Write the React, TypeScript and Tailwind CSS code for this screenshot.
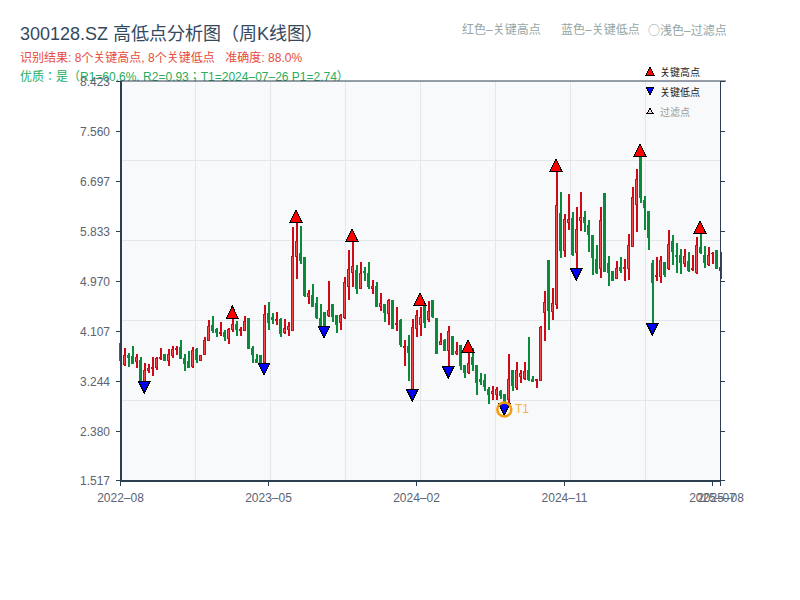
// [red?, high, low, bodyTop, bodyBottom] measured on the plot
type Bar = [number, number, number, number, number];

const seg1: Bar[] = [
  [0, 430, 482, 430, 482], [1, 444, 497, 465, 495], [0, 460, 500, 466, 474], [0, 438, 492, 468, 492],
  [1, 462, 505, 472, 486], [0, 472, 545, 480, 545], [1, 490, 545, 510, 545], [1, 492, 518, 504, 514],
  [1, 472, 528, 502, 508], [1, 470, 510, 474, 504], [1, 444, 480, 472, 478], [0, 462, 483, 462, 483],
  [1, 448, 498, 462, 484], [1, 438, 474, 448, 468], [1, 438, 466, 444, 450], [0, 420, 476, 440, 476],
  [0, 462, 513, 474, 492], [0, 454, 503, 484, 503], [1, 441, 503, 450, 500], [0, 445, 488, 448, 480],
  [1, 464, 484, 466, 482], [1, 411, 465, 420, 465], [1, 360, 424, 378, 424], [0, 348, 398, 376, 392],
  [0, 384, 411, 388, 400], [1, 366, 408, 396, 402], [0, 390, 423, 396, 410], [1, 384, 432, 386, 418],
  [1, 355, 396, 372, 390], [0, 362, 408, 372, 390], [1, 380, 408, 386, 392], [1, 348, 394, 362, 392],
  [0, 354, 447, 354, 447], [0, 438, 489, 444, 464], [0, 462, 490, 478, 488], [0, 465, 490, 465, 490],
  [1, 315, 490, 342, 490], [0, 306, 390, 338, 368], [0, 340, 372, 350, 360], [1, 336, 376, 356, 362],
  [0, 354, 411, 356, 402], [1, 356, 402, 384, 400], [1, 366, 408, 378, 390], [1, 82, 392, 168, 392],
  [1, 68, 236, 124, 170], [0, 78, 192, 160, 182], [0, 170, 292, 170, 288], [1, 270, 312, 280, 290],
];

const seg2: Bar[] = [
  [0, 222, 290, 256, 290], [0, 262, 326, 280, 324], [0, 282, 350, 324, 350], [0, 306, 350, 306, 350],
  [1, 213, 320, 300, 318], [0, 282, 336, 282, 320], [0, 316, 368, 316, 344], [1, 312, 360, 316, 338],
  [1, 202, 326, 216, 324], [1, 120, 270, 178, 230], [1, 95, 230, 168, 188], [0, 166, 252, 180, 236],
  [1, 156, 238, 190, 236], [0, 170, 214, 182, 190], [0, 156, 236, 188, 232], [1, 210, 252, 228, 236],
  [0, 216, 290, 228, 290], [1, 250, 302, 280, 290], [0, 282, 336, 282, 308], [1, 268, 344, 270, 312],
  [0, 270, 356, 270, 356], [1, 292, 362, 340, 346], [0, 326, 410, 330, 406], [1, 390, 468, 408, 414],
  [0, 376, 512, 408, 430], [1, 328, 540, 352, 540], [1, 300, 380, 316, 356], [1, 290, 378, 322, 344],
  [0, 280, 354, 288, 340], [1, 274, 336, 304, 330], [0, 270, 324, 270, 322], [0, 324, 432, 324, 432],
  [1, 370, 404, 394, 404], [0, 388, 424, 390, 422], [1, 348, 470, 364, 422], [0, 378, 434, 378, 434],
  [1, 396, 434, 422, 432], [0, 404, 480, 404, 468], [0, 466, 504, 466, 490], [1, 428, 492, 460, 490],
  [0, 414, 482, 442, 466], [0, 466, 554, 466, 520], [0, 488, 524, 508, 516], [0, 492, 542, 510, 532],
  [0, 532, 582, 536, 556], [1, 528, 570, 544, 552], [1, 532, 570, 536, 556], [0, 540, 566, 542, 558],
  [0, 552, 590, 552, 590], [1, 432, 578, 508, 570],
];

const seg3: Bar[] = [
  [0, 360, 423, 360, 408], [1, 336, 420, 360, 415], [1, 360, 398, 368, 380], [1, 336, 390, 362, 388],
  [0, 262, 392, 360, 390], [0, 378, 395, 388, 395], [1, 388, 414, 388, 392],
];

const seg4: Bar[] = [
  [1, 558, 723, 560, 723], [1, 454, 602, 486, 520], [0, 360, 570, 360, 512], [1, 444, 540, 490, 515],
  [1, 95, 506, 196, 494], [0, 156, 354, 220, 334], [1, 222, 350, 238, 334], [1, 162, 270, 238, 248],
  [0, 216, 348, 234, 344], [1, 202, 385, 268, 338], [1, 156, 272, 230, 242], [0, 213, 276, 232, 248],
  [0, 240, 336, 256, 286], [0, 285, 405, 285, 354], [0, 316, 402, 358, 398], [1, 202, 414, 240, 388],
  [0, 159, 396, 159, 396], [0, 348, 438, 370, 400], [0, 392, 422, 392, 422], [1, 362, 416, 384, 416],
  [0, 352, 400, 380, 392], [1, 358, 422, 382, 386], [1, 282, 420, 316, 386], [1, 142, 320, 172, 320],
  [1, 87, 276, 117, 194], [0, 50, 190, 50, 175], [0, 168, 270, 180, 204], [0, 213, 330, 213, 294],
  [0, 360, 550, 368, 430], [1, 352, 422, 405, 410], [1, 348, 428, 360, 412], [0, 366, 412, 366, 404],
  [1, 270, 390, 312, 388], [0, 286, 376, 304, 336], [0, 310, 400, 344, 352], [0, 326, 402, 346, 368],
  [1, 326, 380, 348, 372], [0, 336, 396, 364, 392], [1, 346, 394, 384, 390], [1, 292, 402, 316, 398],
  [0, 280, 342, 322, 340], [0, 318, 384, 346, 370], [1, 322, 378, 346, 374], [1, 336, 372, 338, 342],
  [0, 330, 388, 330, 388], [1, 336, 416, 382, 392],
];

const toPlot = (bars: Bar[], top: number): Bar[] =>
  bars.map(([c, h, l, a, b]) => [c, top + h / 3, top + l / 3, top + a / 3, top + b / 3]);

const bars = [...toPlot(seg1, 200), ...toPlot(seg2, 210), ...toPlot(seg3, 250), ...toPlot(seg4, 140)];

const yTicks = [
  ["8.423", 81], ["7.560", 131], ["6.697", 181], ["5.833", 231], ["4.970", 281],
  ["4.107", 331], ["3.244", 381], ["2.380", 431], ["1.517", 480],
] as const;

const xTicks = [
  ["2022–08", 120.5], ["2023–05", 268.5], ["2024–02", 416.5], ["2024–11", 564.5], ["2025–07", 712.5], ["2025–08", 720.5],
] as const;

const highs = [[232.3, 306], [296, 210], [352, 229], [420, 293], [468, 340], [556, 159], [640, 144], [700, 221]];
const lows = [[144.3, 393], [264, 375], [324, 338], [412.3, 401], [448.3, 378], [504.3, 415], [576.3, 280], [652.3, 335]];

function Chart() {
  return (
    <svg width={800} height={540} viewBox="0 60 800 540" className="block">
      <rect x={121} y={81} width={599} height={399} fill="#f8f9fb" />
      {[195.5, 270.5, 345.5, 420.5, 495.5, 570.5, 645.5].map((x) => (
        <line key={x} x1={x} x2={x} y1={81} y2={480} stroke="#e3e6ea" />
      ))}
      {[160.5, 240.5, 320.5, 400.5].map((y) => (
        <line key={y} x1={121} x2={720} y1={y} y2={y} stroke="#e3e6ea" />
      ))}

      {bars.map(([red, high, low, top, bottom], i) => {
        const x = Math.floor(120.5 + i * 4);
        const dark = red ? "#cf0a16" : "#0a8a3a";
        return (
          <g key={i} shapeRendering="crispEdges">
            <rect x={x - 0.5} y={high} width={2} height={low - high} fill={dark} />
            <rect x={x - 1} y={top} width={3} height={bottom - top} fill={dark} />
            {red === 1 && <rect x={x} y={top + 1} width={1} height={Math.max(bottom - top - 2, 0)} fill="#f6494c" />}
          </g>
        );
      })}

      {highs.map(([x, y]) => (
        <polygon key={x} points={`${x},${y} ${x + 6},${y + 12.5} ${x - 6},${y + 12.5}`} fill="#ff0000" stroke="#000" shapeRendering="crispEdges" />
      ))}
      {lows.map(([x, y]) => (
        <polygon key={x} points={`${x},${y} ${x + 6},${y - 12} ${x - 6},${y - 12}`} fill="#0000ff" stroke="#000" shapeRendering="crispEdges" />
      ))}

      <circle cx={504.3} cy={409.5} r={7} fill="none" stroke="#f39c12" strokeWidth={2.5} />
      <text x={515} y={412.5} className="fill-[#f5b04a] text-xs">T1</text>

      <line x1={120} x2={726} y1={81} y2={81} stroke="#2c3e50" />
      <line x1={720.5} x2={720.5} y1={81} y2={481} stroke="#2c3e50" />
      <line x1={121} x2={121} y1={81} y2={482} stroke="#2c3e50" strokeWidth={2} />
      <line x1={120} x2={721} y1={481} y2={481} stroke="#2c3e50" strokeWidth={2} />

      {yTicks.map(([label, y]) => (
        <g key={label}>
          <line x1={116} x2={120} y1={y + 0.5} y2={y + 0.5} stroke="#2c3e50" />
          <line x1={720} x2={725} y1={y + 0.5} y2={y + 0.5} stroke="#2c3e50" />
          <text x={110} y={y + 4.5} textAnchor="end" className="fill-[#5a6472] text-xs">{label}</text>
        </g>
      ))}
      {xTicks.map(([label, x]) => (
        <g key={label}>
          <line x1={x} x2={x} y1={482} y2={486} stroke="#2c3e50" />
          <text x={x} y={502} textAnchor="middle" className="fill-[#5a6472] text-xs">{label}</text>
        </g>
      ))}

      <polygon points="650,67 654,75 646,75" fill="#ff0000" stroke="#000" shapeRendering="crispEdges" />
      <text x={660} y={76} className="fill-[#222222] text-[10px]">关键高点</text>
      <polygon points="650,95 654,87 646,87" fill="#0000ff" stroke="#000" shapeRendering="crispEdges" />
      <text x={660} y={96} className="fill-[#222222] text-[10px]">关键低点</text>
      <polygon points="650,108 653,113.5 647,113.5" fill="#ffd6d6" stroke="#000" shapeRendering="crispEdges" />
      <text x={660} y={116} className="fill-[#999999] text-[10px]">过滤点</text>
    </svg>
  );
}

export default function App() {
  return (
    <div className="w-[800px] h-[600px] bg-white font-['Liberation_Sans','Noto_Sans_CJK_JP',sans-serif]">
      <div className="h-[60px] px-5 pt-[22px]">
        <div className="flex">
          <h1 className="w-[442px] text-[18px] leading-6 text-[#34495e]">300128.SZ 高低点分析图（周K线图）</h1>
          <div className="flex text-xs leading-4 text-[#95a5a6]">
            <span className="w-[99px]">红色–关键高点</span>
            <span className="w-[87px]">蓝色–关键低点</span>
            <span><span className="font-['Noto_Sans_CJK_JP',sans-serif]">○</span>浅色–过滤点</span>
          </div>
        </div>
        <p className="mt-[3px] text-xs leading-[19px] text-[#e74c3c]">识别结果: 8个关键高点, 8个关键低点 &nbsp;<span className="ml-1">准确度: 88.0%</span></p>
        <p className="text-xs leading-[19px] text-[#27ae60]">优质：是（R1=60.6%, R2=0.93；T1=2024–07–26 P1=2.74）</p>
      </div>
      <Chart />
    </div>
  );
}
